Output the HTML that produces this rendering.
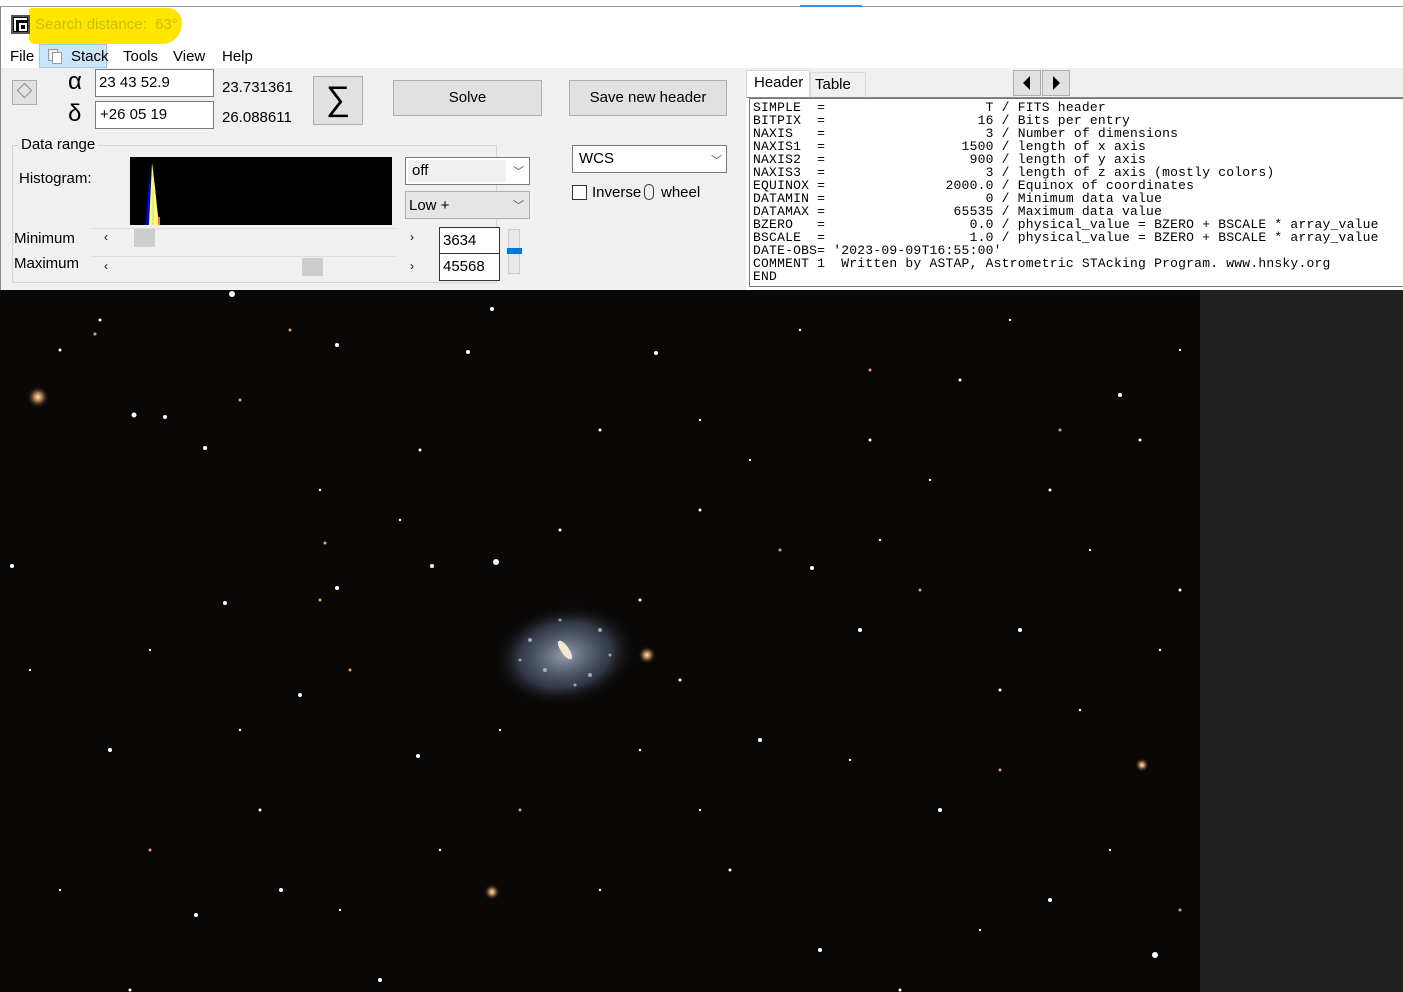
<!DOCTYPE html>
<html><head><meta charset="utf-8"><style>
*{margin:0;padding:0;box-sizing:border-box}
body{width:1403px;height:992px;overflow:hidden;background:#f0f0f0;font-family:"Liberation Sans",sans-serif;font-size:14px;color:#000;position:relative}
.a{position:absolute}
.box{position:absolute;background:#fff;border:1px solid #7a7a7a}
.btn{position:absolute;background:#e1e1e1;border:1px solid #adadad;text-align:center}
pre{font-family:"Liberation Mono",monospace;font-size:13px;line-height:13px;letter-spacing:0.22px}
</style></head><body>
<div class="a" style="left:0;top:0;width:1403px;height:68px;background:#fff"></div>
<div class="a" style="left:0;top:6px;width:1403px;height:1px;background:#9a9a9a"></div>
<div class="a" style="left:800px;top:5px;width:62px;height:2px;background:#3a8ee6"></div>
<div class="a" style="left:0;top:7px;width:1px;height:284px;background:#888"></div>
<div class="a" style="left:29px;top:8px;width:153px;height:36px;background:#ffe600;border-radius:3px 14px 20px 6px"></div>
<div class="a" style="left:11px;top:15px;width:19px;height:19px;background:#000;border:2px solid #555"></div>
<div class="a" style="left:14px;top:18px;width:13px;height:13px;border:2px solid #fff;border-right:none;border-bottom:none"></div>
<div class="a" style="left:19px;top:23px;width:8px;height:8px;border:2px solid #fff"></div>
<div class="a" style="left:35px;top:16px;color:#c7c000;font-size:15px">Search distance:&nbsp; 63°</div>
<div class="a" style="left:39px;top:44px;width:68px;height:24px;background:#cce4f7;border:1px solid #99c9ef"></div>
<div class="a" style="left:48px;top:49px;width:10px;height:12px;border:1px solid #999;background:#eee"></div>
<div class="a" style="left:52px;top:52px;width:10px;height:12px;border:1px solid #999;background:#fff"></div>
<div class="a" style="left:10px;top:48px;font-size:15px">File</div>
<div class="a" style="left:71px;top:48px;font-size:15px">Stack</div>
<div class="a" style="left:123px;top:48px;font-size:15px">Tools</div>
<div class="a" style="left:173px;top:48px;font-size:15px">View</div>
<div class="a" style="left:222px;top:48px;font-size:15px">Help</div>
<div class="a" style="left:12px;top:80px;width:25px;height:25px;background:#e1e1e1;border:1px solid #adadad"></div>
<div class="a" style="left:19px;top:85px;width:11px;height:11px;border:1px solid #888;transform:rotate(45deg)"></div>
<div class="a" style="left:68px;top:68px;font-size:24px">α</div>
<div class="a" style="left:68px;top:100px;font-size:24px">δ</div>
<div class="box" style="left:95px;top:69px;width:119px;height:28px;padding:4px 3px;font-size:15px">23 43 52.9</div>
<div class="box" style="left:95px;top:101px;width:119px;height:28px;padding:4px 4px;font-size:15px">+26 05 19</div>
<div class="a" style="left:222px;top:79px;font-size:15px">23.731361</div>
<div class="a" style="left:222px;top:109px;font-size:15px">26.088611</div>
<div class="btn" style="left:313px;top:76px;width:50px;height:49px;font-size:34px;line-height:45px">∑</div>
<div class="btn" style="left:393px;top:80px;width:149px;height:36px;line-height:34px;font-size:15px">Solve</div>
<div class="btn" style="left:569px;top:80px;width:158px;height:36px;line-height:34px;font-size:15px">Save new header</div>
<div class="a" style="left:12px;top:145px;width:485px;height:138px;border:1px solid #d5d5d5"></div>
<div class="a" style="left:18px;top:136px;background:#f0f0f0;padding:0 3px;font-size:15px">Data range</div>
<div class="a" style="left:19px;top:170px;font-size:15px">Histogram:</div>
<div class="a" style="left:130px;top:157px;width:262px;height:68px;background:#000"></div>
<svg class="a" style="left:130px;top:157px" width="40" height="68"><polygon points="16,68 20,12 22,68" fill="#00f"/><polygon points="19,68 22,6 25,30 27,50 29,68" fill="#ff6"/><polygon points="22,68 23,4 24,68" fill="#dda"/><rect x="28" y="60" width="2" height="8" fill="#f66"/></svg>
<div class="a" style="left:405px;top:157px;width:125px;height:28px;background:#fff;border:1px solid #7a7a7a"></div>
<div class="a" style="left:408px;top:160px;width:98px;height:22px;background:#f0f0f0"></div>
<div class="a" style="left:412px;top:162px;font-size:15px">off</div>
<div class="a" style="left:513px;top:163px;font-size:11px;color:#555">﹀</div>
<div class="a" style="left:405px;top:191px;width:125px;height:28px;background:#e5e5e5;border:1px solid #adadad"></div>
<div class="a" style="left:409px;top:197px;font-size:15px">Low +</div>
<div class="a" style="left:513px;top:197px;font-size:11px;color:#555">﹀</div>
<div class="a" style="left:14px;top:230px;font-size:15px">Minimum</div>
<div class="a" style="left:14px;top:255px;font-size:15px">Maximum</div>
<div class="a" style="left:91px;top:228px;width:305px;height:1px;background:#ddd"></div>
<div class="a" style="left:91px;top:256px;width:305px;height:1px;background:#ddd"></div>
<div class="a" style="left:104px;top:230px;font-size:12px">‹</div><div class="a" style="left:410px;top:230px;font-size:12px">›</div>
<div class="a" style="left:104px;top:259px;font-size:12px">‹</div><div class="a" style="left:410px;top:259px;font-size:12px">›</div>
<div class="a" style="left:134px;top:229px;width:21px;height:18px;background:#cdcdcd"></div>
<div class="a" style="left:302px;top:258px;width:21px;height:18px;background:#cdcdcd"></div>
<div class="box" style="left:439px;top:227px;width:61px;height:27px;border-color:#333;padding:4px 3px;font-size:15px">3634</div>
<div class="box" style="left:439px;top:253px;width:61px;height:28px;border-color:#333;padding:4px 3px;font-size:15px">45568</div>
<div class="a" style="left:508px;top:229px;width:12px;height:45px;background:#e8e8e8;border:1px solid #ccc"></div>
<div class="a" style="left:507px;top:248px;width:15px;height:6px;background:#0078d7"></div>
<div class="a" style="left:572px;top:145px;width:155px;height:28px;background:#fff;border:1px solid #7a7a7a"></div>
<div class="a" style="left:579px;top:150px;font-size:15px">WCS</div>
<div class="a" style="left:711px;top:152px;font-size:11px;color:#555">﹀</div>
<div class="a" style="left:572px;top:185px;width:15px;height:15px;background:#fff;border:1px solid #333"></div>
<div class="a" style="left:592px;top:184px;font-size:15px">Inverse</div>
<div class="a" style="left:644px;top:184px;width:10px;height:16px;border:1px solid #333;border-radius:5px"></div>
<div class="a" style="left:661px;top:184px;font-size:15px">wheel</div>
<div class="a" style="left:746px;top:70px;width:64px;height:28px;background:#fff;border:1px solid #d9d9d9;border-bottom:none"></div>
<div class="a" style="left:754px;top:74px;font-size:15px">Header</div>
<div class="a" style="left:810px;top:72px;width:56px;height:26px;border:1px solid #d9d9d9;border-bottom:none"></div>
<div class="a" style="left:815px;top:76px;font-size:15px">Table</div>
<div class="btn" style="left:1013px;top:70px;width:28px;height:26px"></div>
<div class="btn" style="left:1042px;top:70px;width:28px;height:26px"></div>
<svg class="a" style="left:1013px;top:70px" width="58" height="26"><polygon points="17,6 17,20 10,13" fill="#000"/><polygon points="40,6 40,20 47,13" fill="#000"/></svg>
<div class="a" style="left:746px;top:97px;width:657px;height:193px;background:#fff;border-top:1px solid #888"></div>
<div class="a" style="left:749px;top:98px;width:654px;height:189px;border:1px solid #777;border-right:none"></div>
<pre class="a" style="left:753px;top:101px">SIMPLE  =                    T / FITS header
BITPIX  =                   16 / Bits per entry
NAXIS   =                    3 / Number of dimensions
NAXIS1  =                 1500 / length of x axis
NAXIS2  =                  900 / length of y axis
NAXIS3  =                    3 / length of z axis (mostly colors)
EQUINOX =               2000.0 / Equinox of coordinates
DATAMIN =                    0 / Minimum data value
DATAMAX =                65535 / Maximum data value
BZERO   =                  0.0 / physical_value = BZERO + BSCALE * array_value
BSCALE  =                  1.0 / physical_value = BZERO + BSCALE * array_value
DATE-OBS= '2023-09-09T16:55:00'
COMMENT 1  Written by ASTAP, Astrometric STAcking Program. www.hnsky.org
END</pre>
<div class="a" style="left:0;top:290px;width:1403px;height:702px;background:#202020"></div>
<svg class="a" style="left:0;top:290px" width="1200" height="702">
<defs><radialGradient id="g"><stop offset="0" stop-color="#b8c4d8" stop-opacity=".8"/><stop offset=".65" stop-color="#607090" stop-opacity=".45"/><stop offset="1" stop-color="#0a0807" stop-opacity="0"/></radialGradient>
<radialGradient id="o"><stop offset="0" stop-color="#fff2d0"/><stop offset=".4" stop-color="#e0a060" stop-opacity=".7"/><stop offset="1" stop-color="#0a0807" stop-opacity="0"/></radialGradient></defs>
<rect width="1200" height="702" fill="#0a0807"/>
<ellipse cx="565" cy="365" rx="72" ry="50" fill="url(#g)" transform="rotate(-10 565 365)"/>
<g fill="#c8d4e8" opacity=".7"><circle cx="530" cy="350" r="2"/><circle cx="545" cy="380" r="2"/><circle cx="600" cy="340" r="2"/><circle cx="590" cy="385" r="2"/><circle cx="520" cy="370" r="1.5"/><circle cx="610" cy="365" r="1.5"/><circle cx="560" cy="330" r="1.5"/><circle cx="575" cy="395" r="1.5"/></g>
<ellipse cx="565" cy="360" rx="11" ry="4" fill="#f0e8d0" transform="rotate(55 565 360)"/>
<circle cx="647" cy="365" r="9" fill="url(#o)"/><circle cx="38" cy="107" r="11" fill="url(#o)"/>
<circle cx="492" cy="602" r="8" fill="url(#o)"/><circle cx="1142" cy="475" r="7" fill="url(#o)"/>
<g fill="#fff">
<circle cx="232" cy="4" r="3"/><circle cx="134" cy="125" r="2.5"/><circle cx="165" cy="127" r="2"/><circle cx="496" cy="272" r="3"/><circle cx="225" cy="313" r="2"/><circle cx="432" cy="276" r="2"/><circle cx="418" cy="466" r="2"/><circle cx="337" cy="298" r="2"/><circle cx="196" cy="625" r="2"/><circle cx="281" cy="600" r="2"/><circle cx="1155" cy="665" r="3"/><circle cx="1120" cy="105" r="2"/><circle cx="656" cy="63" r="2"/><circle cx="205" cy="158" r="2"/><circle cx="12" cy="276" r="2"/><circle cx="468" cy="62" r="2"/><circle cx="337" cy="55" r="2"/><circle cx="492" cy="19" r="2"/><circle cx="812" cy="278" r="2"/><circle cx="860" cy="340" r="2"/><circle cx="1020" cy="340" r="2"/><circle cx="940" cy="520" r="2"/><circle cx="760" cy="450" r="2"/><circle cx="300" cy="405" r="2"/><circle cx="110" cy="460" r="2"/><circle cx="1050" cy="610" r="2"/><circle cx="820" cy="660" r="2"/><circle cx="380" cy="690" r="2"/><circle cx="960" cy="90" r="1.5"/><circle cx="1050" cy="200" r="1.5"/><circle cx="870" cy="150" r="1.5"/><circle cx="700" cy="220" r="1.5"/><circle cx="60" cy="60" r="1.5"/><circle cx="100" cy="30" r="1.5"/><circle cx="600" cy="140" r="1.5"/><circle cx="130" cy="700" r="1.5"/><circle cx="900" cy="700" r="1.5"/><circle cx="1180" cy="300" r="1.5"/><circle cx="730" cy="580" r="1.5"/><circle cx="680" cy="390" r="1.5"/><circle cx="1140" cy="150" r="1.5"/><circle cx="1000" cy="400" r="1.5"/><circle cx="260" cy="520" r="1.5"/><circle cx="420" cy="160" r="1.5"/><circle cx="560" cy="240" r="1.5"/><circle cx="640" cy="310" r="1.5"/>
<circle cx="320" cy="200" r="1.2"/><circle cx="400" cy="230" r="1.2"/><circle cx="700" cy="130" r="1.2"/><circle cx="750" cy="170" r="1.2"/><circle cx="880" cy="250" r="1.2"/><circle cx="930" cy="190" r="1.2"/><circle cx="1090" cy="260" r="1.2"/><circle cx="1160" cy="360" r="1.2"/><circle cx="1080" cy="420" r="1.2"/><circle cx="850" cy="470" r="1.2"/><circle cx="700" cy="520" r="1.2"/><circle cx="600" cy="600" r="1.2"/><circle cx="440" cy="560" r="1.2"/><circle cx="340" cy="620" r="1.2"/><circle cx="60" cy="600" r="1.2"/><circle cx="30" cy="380" r="1.2"/><circle cx="150" cy="360" r="1.2"/><circle cx="240" cy="440" r="1.2"/><circle cx="800" cy="40" r="1.2"/><circle cx="1010" cy="30" r="1.2"/><circle cx="1180" cy="60" r="1.2"/><circle cx="980" cy="640" r="1.2"/><circle cx="1110" cy="560" r="1.2"/><circle cx="640" cy="460" r="1.2"/><circle cx="500" cy="440" r="1.2"/>
</g>
<g fill="#e8a060"><circle cx="95" cy="44" r="1.5"/><circle cx="290" cy="40" r="1.5"/><circle cx="325" cy="253" r="1.5"/><circle cx="320" cy="310" r="1.5"/><circle cx="520" cy="520" r="1.5"/><circle cx="780" cy="260" r="1.5"/><circle cx="1000" cy="480" r="1.5"/><circle cx="1180" cy="620" r="1.5"/><circle cx="150" cy="560" r="1.5"/><circle cx="870" cy="80" r="1.5"/><circle cx="350" cy="380" r="1.5"/><circle cx="920" cy="300" r="1.5"/><circle cx="240" cy="110" r="1.5"/><circle cx="1060" cy="140" r="1.5"/></g>
</svg>
</body></html>
